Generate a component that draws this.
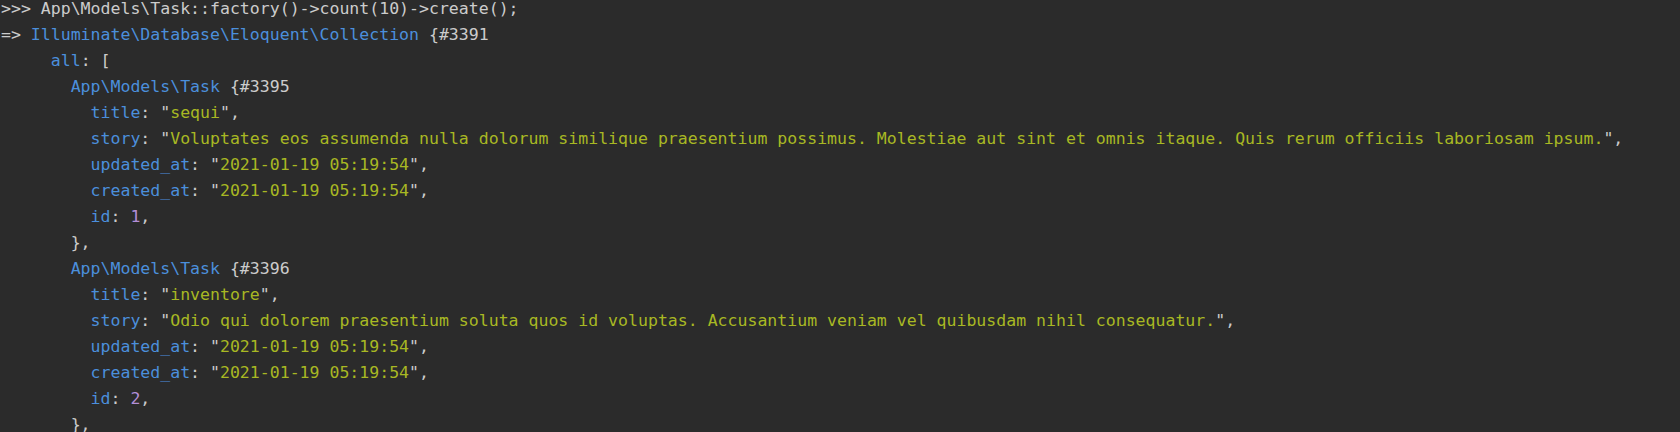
import React from "react";

const B = ({ children }) => <span className="text-[#4b8fdc]">{children}</span>;
const S = ({ children }) => (
  <>
    "<span className="text-[#a8b823]">{children}</span>"
  </>
);
const N = ({ children }) => <span className="text-[#b38ed6]">{children}</span>;

function Task({ id, hash, title, story }) {
  return (
    <>
      <div>
        {"       "}
        <B>App\Models\Task</B> {"{#"}
        {hash}
      </div>
      <div>
        {"         "}
        <B>title</B>: <S>{title}</S>,
      </div>
      <div>
        {"         "}
        <B>story</B>: <S>{story}</S>,
      </div>
      <div>
        {"         "}
        <B>updated_at</B>: <S>2021-01-19 05:19:54</S>,
      </div>
      <div>
        {"         "}
        <B>created_at</B>: <S>2021-01-19 05:19:54</S>,
      </div>
      <div>
        {"         "}
        <B>id</B>: <N>{id}</N>,
      </div>
      <div>{"       },"}</div>
    </>
  );
}

export default function App() {
  return (
    <div className="w-[1680px] h-[432px] overflow-hidden bg-[#2b2b2b]">
      <pre className="-mt-[3.8px] pl-[1px] text-[16.55px] leading-[26px] text-[#cccccc] font-['DejaVu_Sans_Mono',monospace] whitespace-pre">
        <div>{">>> App\\Models\\Task::factory()->count(10)->create();"}</div>
        <div>
          {"=> "}
          <B>Illuminate\Database\Eloquent\Collection</B> {"{#3391"}
        </div>
        <div>
          {"     "}
          <B>all</B>: [
        </div>
        <Task
          id={1}
          hash="3395"
          title="sequi"
          story="Voluptates eos assumenda nulla dolorum similique praesentium possimus. Molestiae aut sint et omnis itaque. Quis rerum officiis laboriosam ipsum."
        />
        <Task
          id={2}
          hash="3396"
          title="inventore"
          story="Odio qui dolorem praesentium soluta quos id voluptas. Accusantium veniam vel quibusdam nihil consequatur."
        />
      </pre>
    </div>
  );
}
